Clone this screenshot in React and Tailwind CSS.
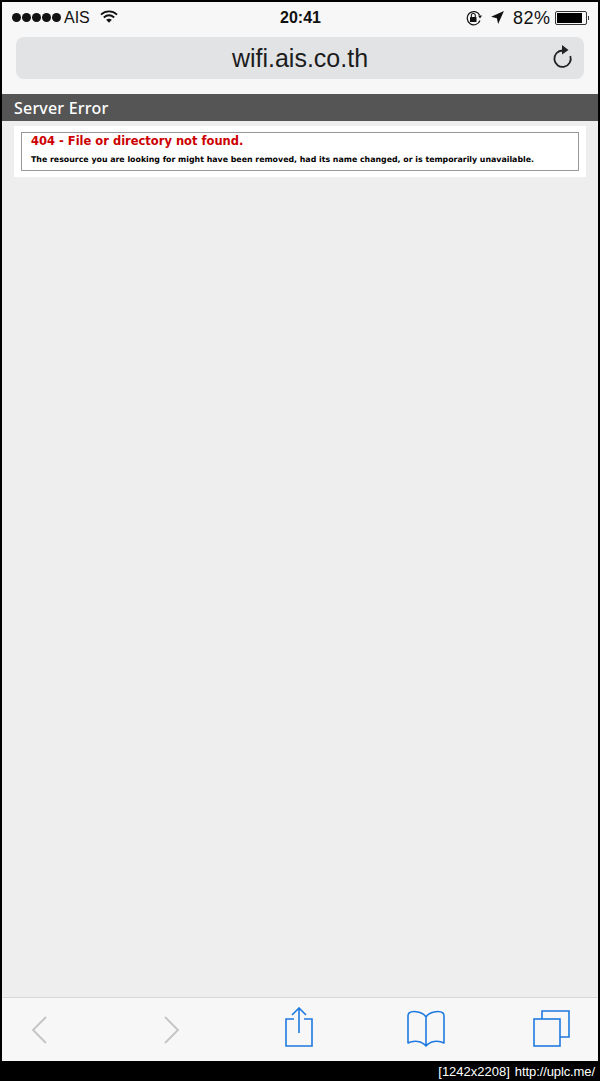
import React from "react";

const helvetica = "font-['Liberation_Sans',sans-serif]";

const App = () => {
  return (
    <div className="w-[600px] h-[1081px] bg-black flex flex-col overflow-hidden">
      <div className="mx-[2px] mt-[2px] h-[1059px] bg-[#eeeeee] flex flex-col">
        {/* Safari header */}
        <div className="h-[92px] bg-[#f7f7f7] flex flex-col">
          <div className={`h-[31px] mb-[2px] flex items-center pl-[10px] pr-[9px] text-[#111] ${helvetica}`}>
            <div className="w-[268px] flex items-center">
              <div className="flex gap-[1px]">
                <span className="w-[9px] h-[9px] rounded-full bg-[#111]" />
                <span className="w-[9px] h-[9px] rounded-full bg-[#111]" />
                <span className="w-[9px] h-[9px] rounded-full bg-[#111]" />
                <span className="w-[9px] h-[9px] rounded-full bg-[#111]" />
                <span className="w-[9px] h-[9px] rounded-full bg-[#111]" />
              </div>
              <span className="ml-[3px] text-[16px] leading-none">AIS</span>
              <svg width="18" height="15" viewBox="0 0 19 15" fill="none" className="ml-[10px] mb-[3px]">
                <path d="M1 5.5C6 1 13 1 18 5.5" stroke="#111" strokeWidth="2" />
                <path d="M4 8.5C7.5 5.5 11.5 5.5 15 8.5" stroke="#111" strokeWidth="2" />
                <path d="M6.5 11C8.5 9.6 10.5 9.6 12.5 11L9.5 14Z" fill="#111" />
              </svg>
            </div>
            <span className="text-[16px] font-bold leading-none">20:41</span>
            <div className="ml-auto flex items-center">
              <svg width="18" height="16" viewBox="0 0 18 16" fill="none">
                <path d="M15 10.5A6.6 6.6 0 1 1 14.6 5" stroke="#111" strokeWidth="1.2" />
                <path d="M13 5.5L17 5.5L15 8.5Z" fill="#111" />
                <rect x="5" y="7" width="6.5" height="5" rx="0.6" fill="#111" />
                <path d="M6.3 7V5.5a2 2 0 0 1 4 0V7" stroke="#111" strokeWidth="1.1" />
              </svg>
              <svg width="15" height="15" viewBox="0 0 14 14" className="ml-[7px]">
                <path d="M13 1L7.6 13L6.4 7.6L1 6.4Z" fill="#111" />
              </svg>
              <span className="ml-[8px] text-[18px] leading-none tracking-[0.5px]">82%</span>
              <div className="ml-[4px] w-[32px] h-[14px] border border-[#333] p-[1px] rounded-[2px]">
                <div className="w-[25px] h-full bg-black" />
              </div>
              <div className="ml-[1px] w-[1.5px] h-[4px] bg-[#333]" />
            </div>
          </div>
          <div className="mt-[2px] mx-[14px] h-[42px] bg-[#e2e3e5] rounded-[8px] flex items-center relative">
            <span className={`w-full text-center text-[25px] leading-none text-[#1c1c1c] ${helvetica}`}>wifi.ais.co.th</span>
            <svg width="22" height="26" viewBox="0 0 22 26" fill="none" className="absolute right-[11px] top-[7px]">
              <path d="M11.5 6.5A8.2 8.2 0 1 0 19.3 12" stroke="#222" strokeWidth="1.8" />
              <path d="M11 1L17.5 6L11 10.5Z" fill="#222" />
            </svg>
          </div>
        </div>

        {/* Error page */}
        <div className="h-[27px] bg-[#555555] flex items-center pl-[12px]">
          <span className="text-[16px] text-white font-['Noto_Sans',sans-serif] font-medium leading-none tracking-[0.2px]">Server Error</span>
        </div>
        <div className="mt-[5px] mx-[12px] h-[51px] bg-white px-[7px] py-[6px]">
          <div className="h-[39px] border border-[#999] pl-[9px] font-['DejaVu_Sans',sans-serif] font-bold">
            <h2 className="text-[11.5px] leading-none text-[#cc0000] mt-[3px]">404 - File or directory not found.</h2>
            <p className="text-[7.85px] leading-none text-black mt-[8px] whitespace-nowrap">
              The resource you are looking for might have been removed, had its name changed, or is temporarily unavailable.
            </p>
          </div>
        </div>
        <div className="flex-1" />

        {/* Safari toolbar */}
        <div className="h-[64px] bg-[#f7f7f7] border-t border-[#d6d6d6] relative">
          <svg width="16" height="28" viewBox="0 0 16 28" fill="none" className="absolute left-[29px] top-[18px]">
            <path d="M15 1L2 14L15 27" stroke="#c4c4c4" strokeWidth="1.8" />
          </svg>
          <svg width="16" height="28" viewBox="0 0 16 28" fill="none" className="absolute left-[162px] top-[18px]">
            <path d="M1 1L14 14L1 27" stroke="#c4c4c4" strokeWidth="1.8" />
          </svg>
          <svg width="30" height="40" viewBox="0 0 30 40" fill="none" className="absolute left-[282px] top-[9px]">
            <path d="M10 12H2V39H28V12H20" stroke="#1f7ae0" strokeWidth="1.6" />
            <path d="M15 1V26M8 8L15 1L22 8" stroke="#1f7ae0" strokeWidth="1.6" />
          </svg>
          <svg width="38" height="38" viewBox="0 0 38 38" fill="none" className="absolute left-[405px] top-[12px]">
            <path d="M19 7C16 2 6 0 2 3Q1 4 1 6V33C7 30 15 31 19 36C23 31 31 30 37 33V6Q37 4 36 3C32 0 22 2 19 7ZM19 7V36" stroke="#1f7ae0" strokeWidth="1.6" strokeLinejoin="round" />
          </svg>
          <svg width="38" height="38" viewBox="0 0 38 38" fill="none" className="absolute left-[531px] top-[12px]">
            <rect x="1" y="9" width="26" height="27" stroke="#1f7ae0" strokeWidth="1.6" />
            <path d="M9 9V1H36V27H27" stroke="#1f7ae0" strokeWidth="1.6" />
          </svg>
        </div>
      </div>
      <div className={`h-[20px] flex items-center justify-end pr-[5px] text-white text-[13px] leading-none whitespace-nowrap ${helvetica}`}>
        <span>[1242x2208]</span>
        <span className="ml-[5px] tracking-[-0.1px]">http://uplc.me/</span>
      </div>
    </div>
  );
};

export default App;
